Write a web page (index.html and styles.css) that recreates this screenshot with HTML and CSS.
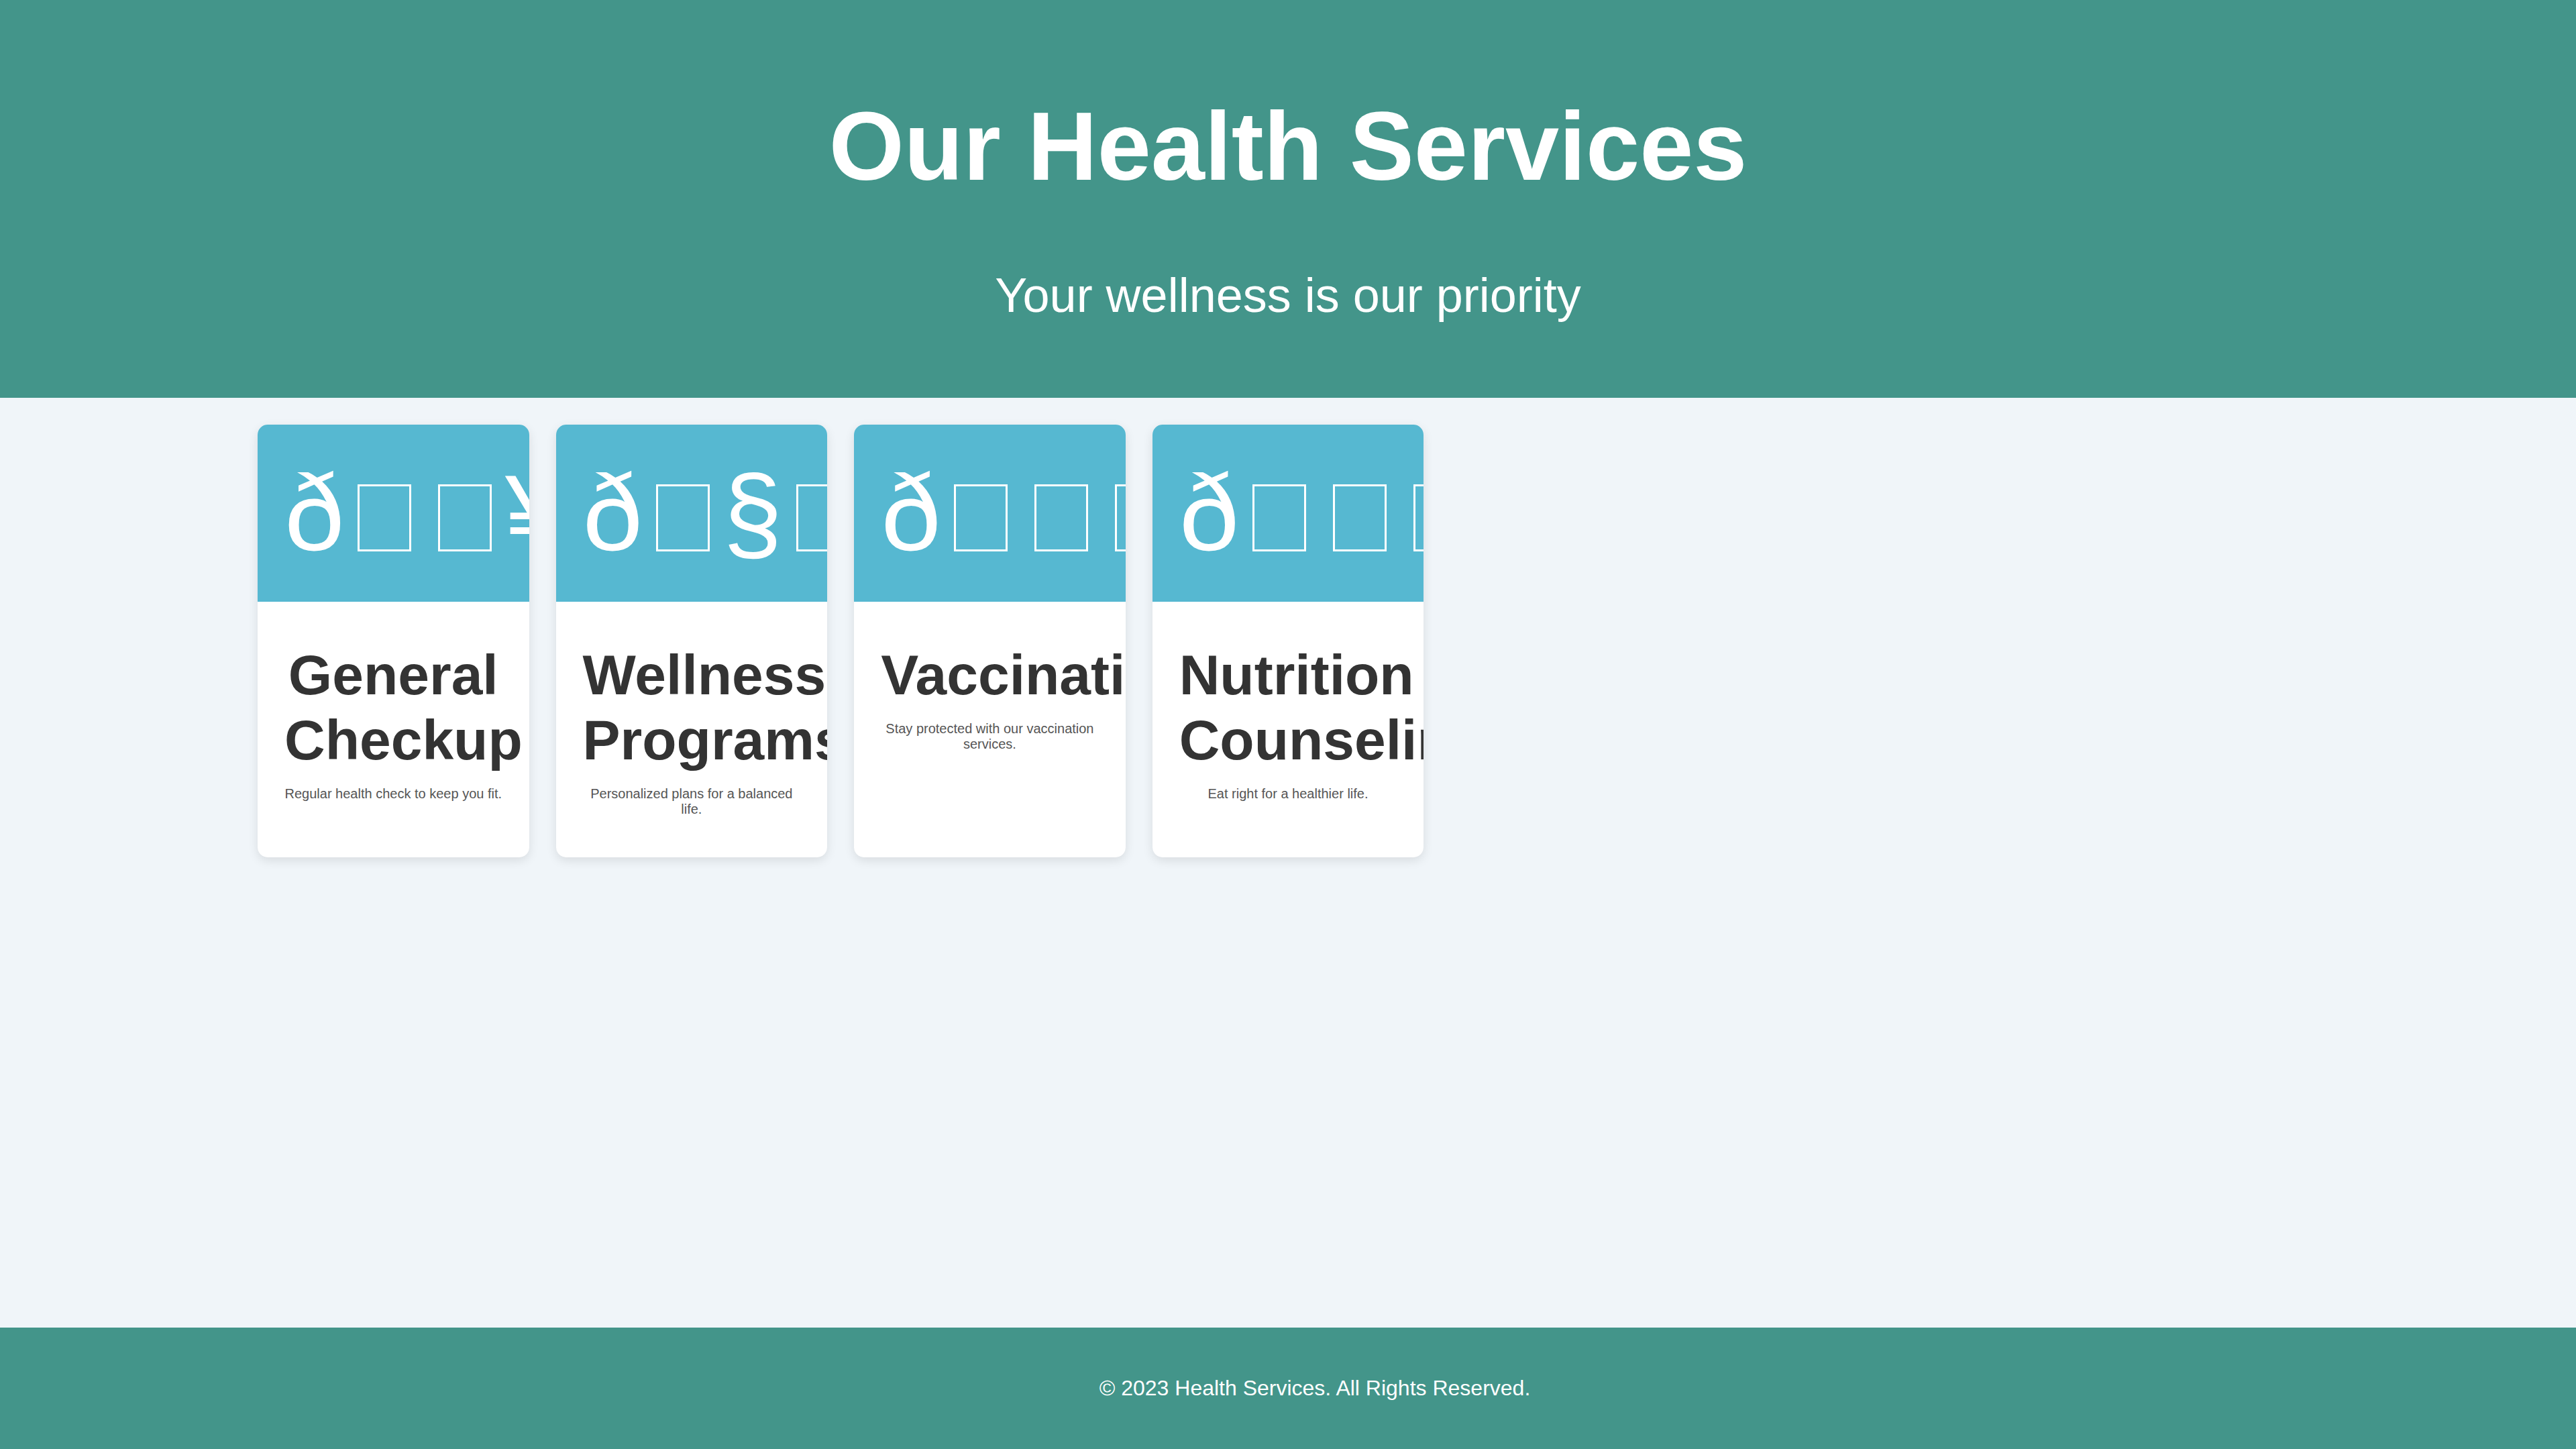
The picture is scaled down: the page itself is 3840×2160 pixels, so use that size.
FILE: index.html
```html
<!DOCTYPE html>
<html lang="en">
<head>
<meta charset="UTF-8">
<title>Our Health Services</title>
<link rel="stylesheet" href="styles.css">
</head>
<body>
<header class="site-header">
  <h1 class="site-title">Our Health Services</h1>
  <p class="site-tagline">Your wellness is our priority</p>
</header>
<main class="site-main">
  <section class="services">
    <article class="card">
      <div class="card-icon">ð<span class="tofu"></span><span class="tofu"></span>¥</div>
      <div class="card-body">
        <h2 class="card-title">General Checkup</h2>
        <p class="card-text">Regular health check to keep you fit.</p>
      </div>
    </article>
    <article class="card">
      <div class="card-icon">ð<span class="tofu"></span>§<span class="tofu"></span></div>
      <div class="card-body">
        <h2 class="card-title">Wellness Programs</h2>
        <p class="card-text">Personalized plans for a balanced life.</p>
      </div>
    </article>
    <article class="card">
      <div class="card-icon">ð<span class="tofu"></span><span class="tofu"></span><span class="tofu"></span></div>
      <div class="card-body">
        <h2 class="card-title">Vaccination</h2>
        <p class="card-text">Stay protected with our vaccination services.</p>
      </div>
    </article>
    <article class="card">
      <div class="card-icon">ð<span class="tofu"></span><span class="tofu"></span><span class="tofu"></span></div>
      <div class="card-body">
        <h2 class="card-title">Nutrition Counseling</h2>
        <p class="card-text">Eat right for a healthier life.</p>
      </div>
    </article>
  </section>
</main>
<footer class="site-footer">
  <p class="footer-text">© 2023 Health Services. All Rights Reserved.</p>
</footer>
</body>
</html>
```
FILE: styles.css
```css
html, body {
  margin: 0;
  padding: 0;
}
body {
  font-family: "Liberation Sans", Arial, sans-serif;
  background: #f0f5f9;
  color: #333;
  min-height: 100vh;
  display: flex;
  flex-direction: column;
  overflow-x: hidden;
}
.site-header {
  background: #43958a;
  color: #fff;
  text-align: center;
  padding: 40px;
}
.site-title {
  font-size: 144px;
  font-weight: bold;
  margin: 0.67em 0;
}
.site-tagline {
  font-size: 72px;
  margin: 72px 0;
}
.site-main {
  flex: 1;
  padding: 40px;
}
.services {
  max-width: 3072px;
  margin: 0 auto;
  display: grid;
  grid-template-columns: repeat(auto-fill, minmax(400px, 1fr));
  gap: 40px;
}
.card {
  background: #fff;
  border-radius: 15px;
  overflow: hidden;
  box-shadow: 0 5px 15px rgba(0, 0, 0, 0.1);
  text-align: center;
}
.card-icon {
  background: #56b8d1;
  color: #fff;
  font-family: "Liberation Sans", Arial, sans-serif;
  font-size: 160px;
  line-height: normal;
  padding: 40px;
  white-space: nowrap;
}
.tofu {
  display: inline-block;
  box-sizing: border-box;
  width: 80px;
  height: 100px;
  margin: 0 20px -2px;
  border: 3px solid #fff;
}
.card-body {
  padding: 40px;
}
.card-title {
  font-size: 84px;
  font-weight: bold;
  color: #333;
  margin: 21px 0 20px;
}
.card-text {
  font-size: 20px;
  color: #555;
  margin: 20px 0;
}
.site-footer {
  width: 100%;
  background: #43958a;
  color: #fff;
  text-align: center;
  padding: 40px;
}
.footer-text {
  font-size: 32px;
  margin: 32px 0;
}
```
